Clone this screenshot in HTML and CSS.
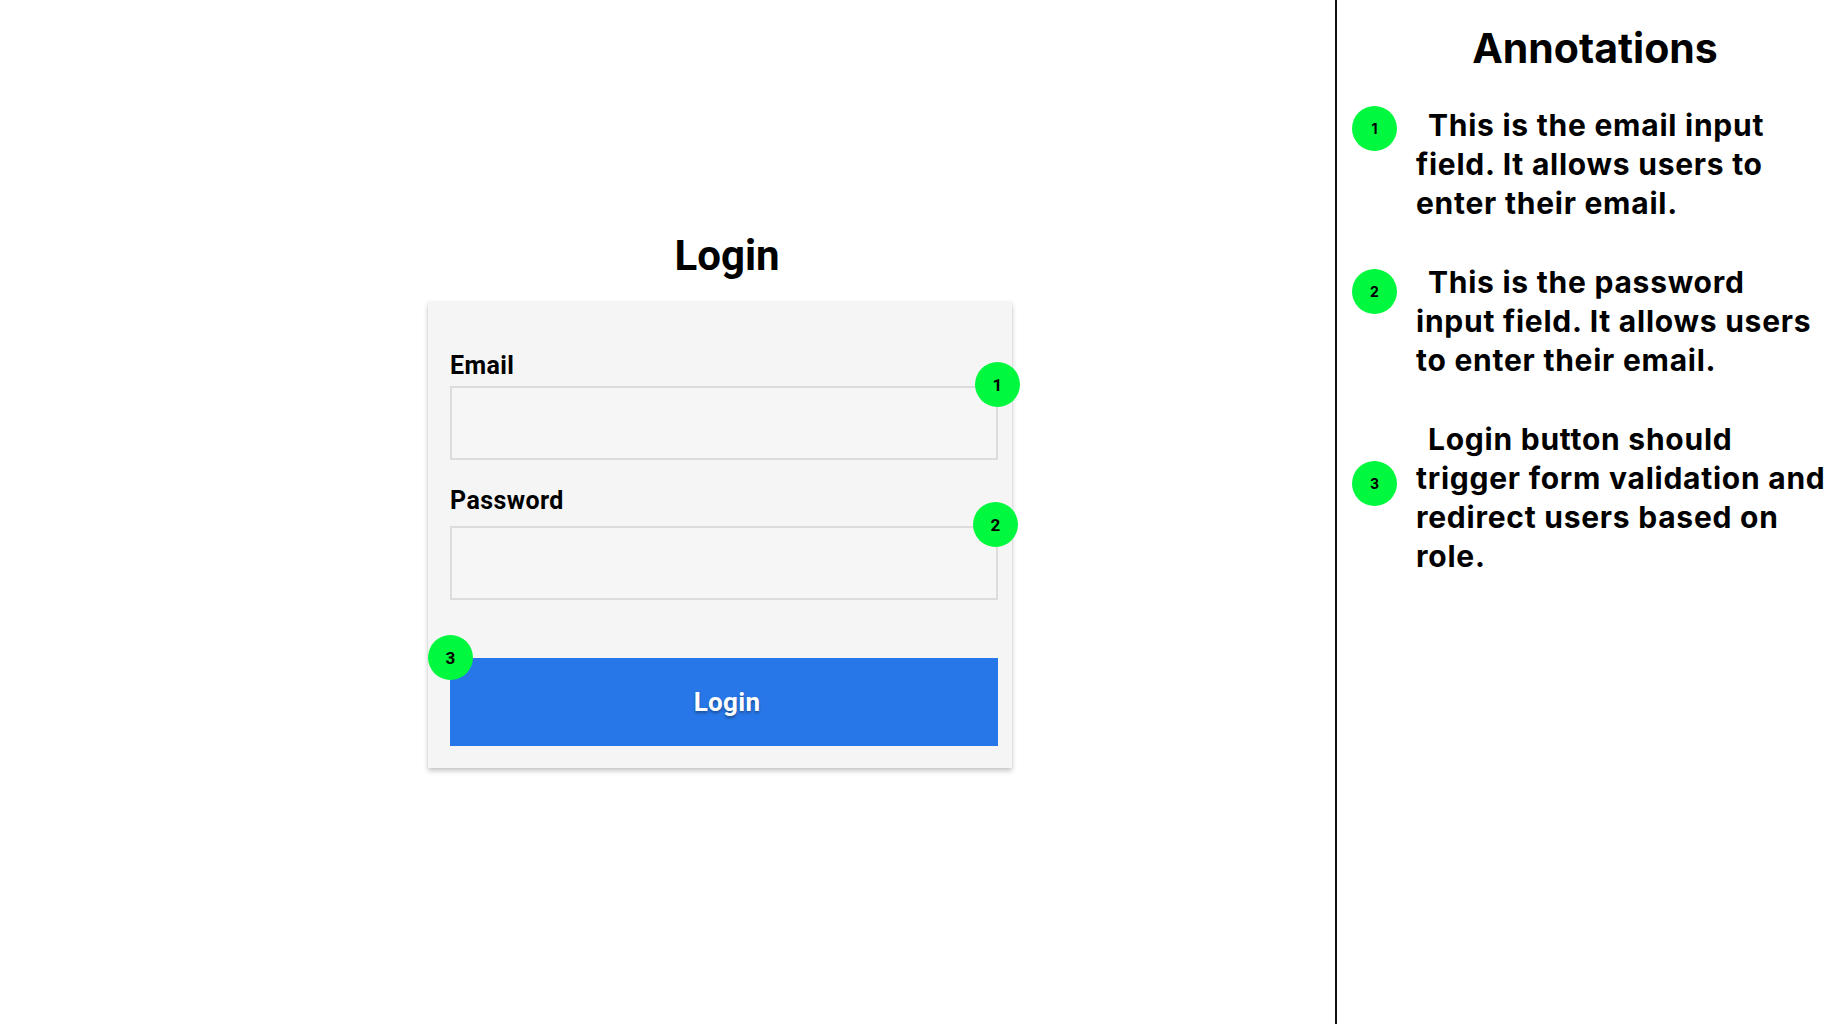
FILE: index.html
```html
<!DOCTYPE html>
<html lang="en">
<head>
<meta charset="utf-8">
<title>Login</title>
<link rel="stylesheet" href="styles.css">
</head>
<body>
<div class="page">
  <main class="stage">
    <div class="login">
      <h1 class="login-title">Login</h1>
      <form class="card">
        <label class="field-label label-email" for="email">Email</label>
        <div class="field field-email">
          <input class="field-input" id="email" type="email">
          <span class="badge badge-1">1</span>
        </div>
        <label class="field-label label-password" for="password">Password</label>
        <div class="field field-password">
          <input class="field-input" id="password" type="password">
          <span class="badge badge-2">2</span>
        </div>
        <div class="field field-button">
          <button class="login-button" type="button">Login</button>
          <span class="badge badge-3">3</span>
        </div>
      </form>
    </div>
  </main>
  <aside class="annotations">
    <h2 class="ann-title">Annotations</h2>
    <div class="ann-item">
      <span class="ann-dot">1</span>
      <p class="ann-text">This is the email input field. It allows users to enter their email.</p>
    </div>
    <div class="ann-item ann-item-2">
      <span class="ann-dot">2</span>
      <p class="ann-text">This is the password input field. It allows users to enter their email.</p>
    </div>
    <div class="ann-item ann-item-3">
      <span class="ann-dot">3</span>
      <p class="ann-text">Login button should trigger form validation and redirect users based on role.</p>
    </div>
  </aside>
</div>
</body>
</html>
```

FILE: styles.css
```css
* { box-sizing: border-box; }

html, body {
  margin: 0;
  padding: 0;
  background: #ffffff;
  color: #000000;
}

.page {
  display: flex;
  width: 1848px;
  height: 1024px;
  overflow: hidden;
}

.stage {
  flex: 0 0 1335px;
}

.login {
  margin-left: 428px;
  padding-top: 231px;
  width: 584px;
  font-family: Roboto, "Liberation Sans", Arial, sans-serif;
}

.login-title {
  margin: 0 0 22px 0;
  padding-left: 14px;
  text-align: center;
  font-size: 42px;
  line-height: 49px;
  font-weight: 700;
}

.card {
  display: flex;
  flex-direction: column;
  background: #f5f5f5;
  padding: 50px 14px 22px 22px;
  box-shadow: 0 3px 5px rgba(0, 0, 0, 0.22), 0 0 1px rgba(0, 0, 0, 0.15);
}

.field-label {
  display: block;
  font-size: 25px;
  line-height: 28px;
  font-weight: 700;
  letter-spacing: 0.4px;
}

.label-email { margin-bottom: 6px; }
.label-password { margin-top: 27px; margin-bottom: 11px; }

.field {
  position: relative;
}

.field-input {
  display: block;
  width: 100%;
  height: 74px;
  margin: 0;
  border: 2px solid #dcdcdc;
  background: #f6f6f6;
  outline: none;
}

.field-button {
  margin-top: 58px;
}

.login-button {
  display: block;
  width: 100%;
  height: 88px;
  margin: 0;
  padding: 0 0 0 6px;
  border: none;
  background: #2877e8;
  color: #ffffff;
  font-family: Roboto, "Liberation Sans", Arial, sans-serif;
  font-size: 26px;
  font-weight: 700;
  letter-spacing: 0.3px;
  text-shadow: 0 2px 3px rgba(0, 0, 0, 0.35);
}

.badge {
  position: absolute;
  width: 45px;
  height: 45px;
  border-radius: 50%;
  background: #00f83e;
  color: #000;
  display: flex;
  align-items: center;
  justify-content: center;
  font-family: Roboto, "Liberation Sans", Arial, sans-serif;
  font-size: 17px;
  font-weight: 700;
}

.badge-1 { top: -24px; right: -22px; }
.badge-2 { top: -24px; right: -20px; }
.badge-3 { top: -23px; left: -22px; }

.annotations {
  flex: 1;
  border-left: 2px solid #111;
  padding: 24px 21px 0 15px;
  font-family: Inter, "Noto Sans", "Liberation Sans", sans-serif;
}

.ann-title {
  margin: 0 0 33px 0;
  padding-left: 11px;
  text-align: center;
  font-size: 41px;
  line-height: 49px;
  font-weight: 700;
}

.ann-item {
  display: flex;
  align-items: flex-start;
  gap: 19px;
  margin-bottom: 40px;
}

.ann-dot {
  flex: 0 0 45px;
  width: 45px;
  height: 45px;
  border-radius: 50%;
  background: #00f83e;
  display: flex;
  align-items: center;
  justify-content: center;
  font-size: 14px;
  font-weight: 700;
}

.ann-item-2 .ann-dot { margin-top: 6px; }
.ann-item-3 .ann-dot { margin-top: 41px; }

.ann-text {
  margin: 0;
  flex: 1;
  text-indent: 12px;
  font-size: 30px;
  line-height: 39px;
  font-weight: 700;
  letter-spacing: 0.75px;
}
```
